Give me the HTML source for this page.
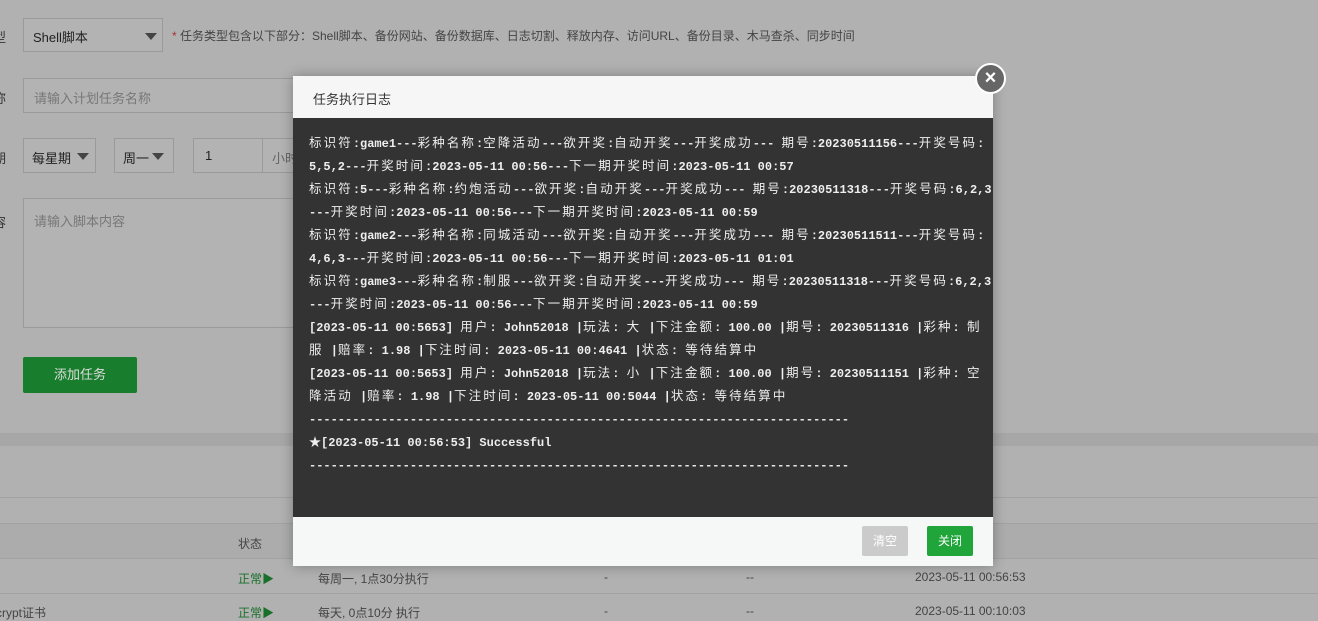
<!DOCTYPE html>
<html><head><meta charset="utf-8"><style>
*{margin:0;padding:0;box-sizing:border-box}
body{width:1318px;height:616px;overflow:hidden;background:#b1b1b1;font-family:"Liberation Sans","Noto Sans CJK SC",sans-serif;font-size:13px;color:#333;position:relative}
.a{position:absolute}
.box{position:absolute;border:1px solid #9a9a9a;background:#b3b3b3;color:#222}
.ph{color:#777}
.tri{position:absolute;width:0;height:0;border-left:6px solid transparent;border-right:6px solid transparent;border-top:7px solid #444}
.hl{position:absolute;left:0;width:1318px;height:1px;background:#a2a2a2}
.log{position:absolute;left:309px;top:133px;font-family:"Liberation Mono","Noto Sans CJK SC",monospace;font-size:12px;line-height:23px;color:#eee;white-space:pre;font-weight:bold}
.log b{font-size:12.5px;letter-spacing:2.1px;font-weight:normal}
</style></head><body>
<div class="a" style="left:-7px;top:27px;color:#333">型</div>
<div class="box" style="left:23px;top:18px;width:140px;height:34px;padding:8px 9px">Shell脚本</div>
<div class="tri" style="left:145px;top:33px"></div>
<div class="a" style="left:172px;top:27px;font-size:12px;color:#444"><span style="color:#a33">*</span> 任务类型包含以下部分：Shell脚本、备份网站、备份数据库、日志切割、释放内存、访问URL、备份目录、木马查杀、同步时间</div>
<div class="a" style="left:-7px;top:88px">称</div>
<div class="box" style="left:23px;top:78px;width:290px;height:35px;padding:9px 10px"><span class="ph">请输入计划任务名称</span></div>
<div class="a" style="left:-7px;top:148px">期</div>
<div class="box" style="left:23px;top:138px;width:73px;height:35px;padding:9px 8px">每星期</div><div class="tri" style="left:77px;top:153px"></div>
<div class="box" style="left:114px;top:138px;width:60px;height:35px;padding:9px 8px">周一</div><div class="tri" style="left:152px;top:153px"></div>
<div class="box" style="left:193px;top:138px;width:110px;height:35px;padding:9px 11px">1</div>
<div class="a" style="left:262px;top:139px;width:1px;height:33px;background:#9a9a9a"></div>
<div class="a" style="left:272px;top:148px;color:#666">小时</div>
<div class="a" style="left:-7px;top:212px">容</div>
<div class="box" style="left:23px;top:198px;width:290px;height:130px;padding:12px 10px"><span class="ph">请输入脚本内容</span></div>
<div class="a" style="left:23px;top:357px;width:114px;height:36px;background:#187d2c;color:#ddd;text-align:center;line-height:36px;border-radius:2px">添加任务</div>
<div class="a" style="left:0;top:433px;width:1318px;height:13px;background:#a7a7a7"></div>
<div class="hl" style="top:497px"></div>
<div class="a" style="left:0;top:523px;width:1318px;height:35px;background:#acacac"></div>
<div class="hl" style="top:523px"></div>
<div class="hl" style="top:558px"></div>
<div class="hl" style="top:593px"></div>
<div class="a" style="left:238px;top:535px;font-size:12px;color:#444">状态</div>
<div class="a" style="left:238px;top:570px;font-size:12px;color:#19702a">正常▶</div>
<div class="a" style="left:318px;top:570px;font-size:12px;color:#444">每周一, 1点30分执行</div>
<div class="a" style="left:604px;top:570px;font-size:12px;color:#444">-</div>
<div class="a" style="left:746px;top:570px;font-size:12px;color:#444">--</div>
<div class="a" style="left:915px;top:570px;font-size:12px;color:#444">2023-05-11 00:56:53</div>
<div class="a" style="left:-4px;top:604px;font-size:12px;color:#444">crypt证书</div>
<div class="a" style="left:238px;top:604px;font-size:12px;color:#19702a">正常▶</div>
<div class="a" style="left:318px;top:604px;font-size:12px;color:#444">每天, 0点10分 执行</div>
<div class="a" style="left:604px;top:604px;font-size:12px;color:#444">-</div>
<div class="a" style="left:746px;top:604px;font-size:12px;color:#444">--</div>
<div class="a" style="left:915px;top:604px;font-size:12px;color:#444">2023-05-11 00:10:03</div>

<div class="a" style="left:293px;top:76px;width:700px;height:490px;background:#333;box-shadow:0 0 12px rgba(0,0,0,.3)">
<div style="height:42px;background:#f6f6f6;padding:13px 20px;font-size:13px;color:#333">任务执行日志</div>
<div class="a" style="left:0;top:441px;width:700px;height:49px;background:#f6f8f8"></div>
<div class="a" style="left:569px;top:450px;width:46px;height:30px;background:#cbcbcb;color:#fff;text-align:center;line-height:30px;font-size:12px;border-radius:2px">清空</div>
<div class="a" style="left:634px;top:450px;width:46px;height:30px;background:#20a53a;color:#fff;text-align:center;line-height:30px;font-size:12px;border-radius:2px">关闭</div>
</div>
<div class="log"><b>标识符</b>:game1---<b>彩种名称</b>:<b>空降活动</b>---<b>欲开奖</b>:<b>自动开奖</b>---<b>开奖成功</b>--- <b>期号</b>:20230511156---<b>开奖号码</b>:
5,5,2---<b>开奖时间</b>:2023-05-11 00:56---<b>下一期开奖时间</b>:2023-05-11 00:57
<b>标识符</b>:5---<b>彩种名称</b>:<b>约炮活动</b>---<b>欲开奖</b>:<b>自动开奖</b>---<b>开奖成功</b>--- <b>期号</b>:20230511318---<b>开奖号码</b>:6,2,3
---<b>开奖时间</b>:2023-05-11 00:56---<b>下一期开奖时间</b>:2023-05-11 00:59
<b>标识符</b>:game2---<b>彩种名称</b>:<b>同城活动</b>---<b>欲开奖</b>:<b>自动开奖</b>---<b>开奖成功</b>--- <b>期号</b>:20230511511---<b>开奖号码</b>:
4,6,3---<b>开奖时间</b>:2023-05-11 00:56---<b>下一期开奖时间</b>:2023-05-11 01:01
<b>标识符</b>:game3---<b>彩种名称</b>:<b>制服</b>---<b>欲开奖</b>:<b>自动开奖</b>---<b>开奖成功</b>--- <b>期号</b>:20230511318---<b>开奖号码</b>:6,2,3
---<b>开奖时间</b>:2023-05-11 00:56---<b>下一期开奖时间</b>:2023-05-11 00:59
[2023-05-11 00:5653] <b>用户</b>: John52018 |<b>玩法</b>: <b>大</b> |<b>下注金额</b>: 100.00 |<b>期号</b>: 20230511316 |<b>彩种</b>: <b>制</b>
<b>服</b> |<b>赔率</b>: 1.98 |<b>下注时间</b>: 2023-05-11 00:4641 |<b>状态</b>: <b>等待结算中</b>
[2023-05-11 00:5653] <b>用户</b>: John52018 |<b>玩法</b>: <b>小</b> |<b>下注金额</b>: 100.00 |<b>期号</b>: 20230511151 |<b>彩种</b>: <b>空</b>
<b>降活动</b> |<b>赔率</b>: 1.98 |<b>下注时间</b>: 2023-05-11 00:5044 |<b>状态</b>: <b>等待结算中</b>
---------------------------------------------------------------------------
★[2023-05-11 00:56:53] Successful
---------------------------------------------------------------------------</div>
<div class="a" style="left:975px;top:63px;width:31px;height:31px;border-radius:50%;background:#666;border:2px solid #fff;color:#fff;text-align:center;line-height:26px;font-size:20px;font-weight:bold">×</div>
</body></html>
